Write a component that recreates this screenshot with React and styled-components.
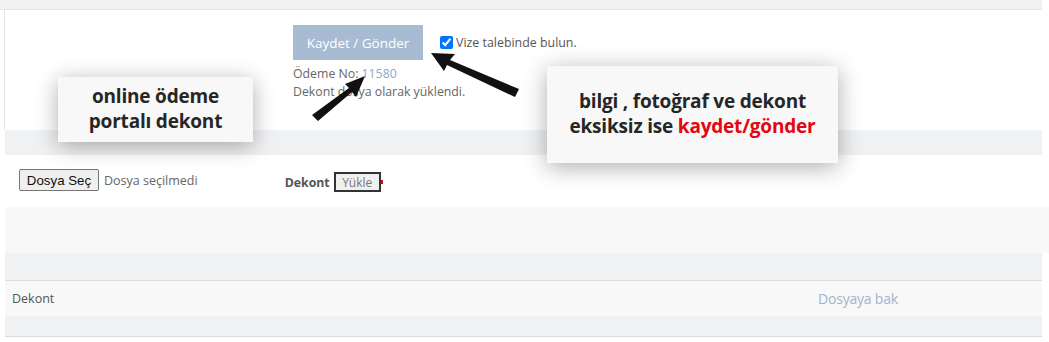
import React from "react";
import styled, { createGlobalStyle } from "styled-components";

const GlobalStyle = createGlobalStyle`
  html, body { margin: 0; padding: 0; background: #ffffff; }
  body { font-family: "Open Sans", "Noto Sans", sans-serif; color: #666; }
`;

function App() {
  return (
    <Page>
      <GlobalStyle />
      <TopStrip />
      <FormPanel>
        <Actions>
          <SubmitButton>Kaydet / Gönder</SubmitButton>
          <CheckLabel>
            <input type="checkbox" defaultChecked />
            Vize talebinde bulun.
          </CheckLabel>
        </Actions>
        <InfoLine>
          Ödeme No: <PaymentNo>11580</PaymentNo>
        </InfoLine>
        <InfoLine>Dekont dosya olarak yüklendi.</InfoLine>
      </FormPanel>
      <Band h={25} />
      <UploadRow>
        <FileButton>Dosya Seç</FileButton>
        <FileName>Dosya seçilmedi</FileName>
        <UploadGroup>
          <UploadLabel>Dekont</UploadLabel>
          <UploadButton>Yükle</UploadButton>
          <RedDot />
        </UploadGroup>
      </UploadRow>
      <FaintPanel />
      <Band h={27} />
      <ListRow>
        <ListLabel>Dekont</ListLabel>
        <ListLink>Dosyaya bak</ListLink>
      </ListRow>
      <Band h={20} bottom />

      <Callout left={58} top={77} width={195} height={65}>
        <CalloutText>
          online ödeme
          <br />
          portalı dekont
        </CalloutText>
      </Callout>
      <Callout left={547} top={66} width={291} height={97}>
        <CalloutText>
          bilgi , fotoğraf ve dekont
          <br />
          eksiksiz ise <Red>kaydet/gönder</Red>
        </CalloutText>
      </Callout>

      <Arrows width="1049" height="342" viewBox="0 0 1049 342">
        <polygon points="312,115 318,121 352,92 356,97 365,76 345,84 349,88" fill="#111" />
        <polygon points="519,89 515,97 447,65 444,71 431,53 455,54 450,60" fill="#111" />
      </Arrows>
    </Page>
  );
}

const Page = styled.div`
  position: relative;
  width: 1049px;
  height: 342px;
  overflow: hidden;
`;

const TopStrip = styled.div`
  width: 1042px;
  height: 9px;
  background: #f0f1f3;
  border-bottom: 1px solid #e4e5e7;
`;

const FormPanel = styled.div`
  box-sizing: border-box;
  margin-left: 4px;
  width: 1038px;
  height: 120px;
  background: #fff;
  border-left: 1px solid #e6e6e6;
  padding: 15px 0 0 288px;
`;

const Actions = styled.div`
  display: flex;
  align-items: center;
  gap: 17px;
  margin-bottom: 5px;
`;

const SubmitButton = styled.div`
  width: 130px;
  height: 35px;
  display: flex;
  align-items: center;
  justify-content: center;
  background: #a7bcd3;
  color: #fff;
  font-size: 13.5px;
`;

const CheckLabel = styled.label`
  display: flex;
  align-items: center;
  font-size: 12.4px;
  color: #555;
  margin-top: -1px;
  input {
    margin: 0 3px 0 0;
    width: 13px;
    height: 13px;
  }
`;

const InfoLine = styled.div`
  font-size: 12.3px;
  line-height: 18px;
  color: #666;
`;

const PaymentNo = styled.span`
  color: #8ea8c5;
`;

const Band = styled.div`
  margin-left: 5px;
  width: 1037px;
  height: ${(p) => p.h}px;
  background: #f0f1f3;
  border-bottom: ${(p) => (p.bottom ? "1px solid #dcdcdc" : "none")};
`;

const UploadRow = styled.div`
  box-sizing: border-box;
  margin-left: 5px;
  height: 52px;
  display: flex;
  align-items: center;
  padding: 0 0 2px 14px;
  background: #fff;
`;

const FileButton = styled.div`
  box-sizing: border-box;
  height: 22px;
  width: 80px;
  display: flex;
  align-items: center;
  justify-content: center;
  font-family: "Liberation Sans", Arial, sans-serif;
  font-size: 13.3px;
  color: #111;
  background: #efefef;
  border: 1px solid #767676;
  border-radius: 2px;
`;

const FileName = styled.span`
  margin-left: 5px;
  font-size: 12.5px;
  color: #666;
`;

const UploadGroup = styled.div`
  display: flex;
  align-items: center;
  margin-left: 87px;
  margin-top: 4px;
`;

const UploadLabel = styled.span`
  font-size: 12.3px;
  font-weight: 700;
  color: #555;
  margin-right: 4px;
`;

const UploadButton = styled.div`
  box-sizing: border-box;
  height: 20px;
  width: 47px;
  display: flex;
  align-items: center;
  justify-content: center;
  border: 2px solid #333;
  background: #f0f0f0;
  font-size: 12px;
  color: #777;
`;

const RedDot = styled.span`
  width: 2px;
  height: 4px;
  background: #e00;
`;

const FaintPanel = styled.div`
  margin-left: 5px;
  height: 46px;
  background: #f8f8f8;
`;

const ListRow = styled.div`
  box-sizing: border-box;
  margin-left: 5px;
  width: 1037px;
  height: 36px;
  display: flex;
  align-items: center;
  background: #f8f8f8;
  border-top: 1px solid #dcdcdc;
  padding-left: 7px;
`;

const ListLabel = styled.span`
  width: 806px;
  font-size: 12.5px;
  color: #555;
`;

const ListLink = styled.span`
  font-size: 14px;
  letter-spacing: -0.2px;
  color: #9db5ce;
`;

const Callout = styled.div`
  position: absolute;
  left: ${(p) => p.left}px;
  top: ${(p) => p.top}px;
  width: ${(p) => p.width}px;
  height: ${(p) => p.height}px;
  display: flex;
  align-items: center;
  justify-content: center;
  background: #f8f8f8;
  box-shadow: 0 4px 22px rgba(0, 0, 0, 0.32);
`;

const CalloutText = styled.div`
  text-align: center;
  font-family: "Open Sans", sans-serif;
  font-weight: 700;
  font-size: 19px;
  line-height: 25px;
  color: #262626;
  letter-spacing: -0.2px;
  margin-top: -2px;
`;

const Red = styled.span`
  color: #e30613;
`;

const Arrows = styled.svg`
  position: absolute;
  left: 0;
  top: 0;
  pointer-events: none;
`;

export default App;
